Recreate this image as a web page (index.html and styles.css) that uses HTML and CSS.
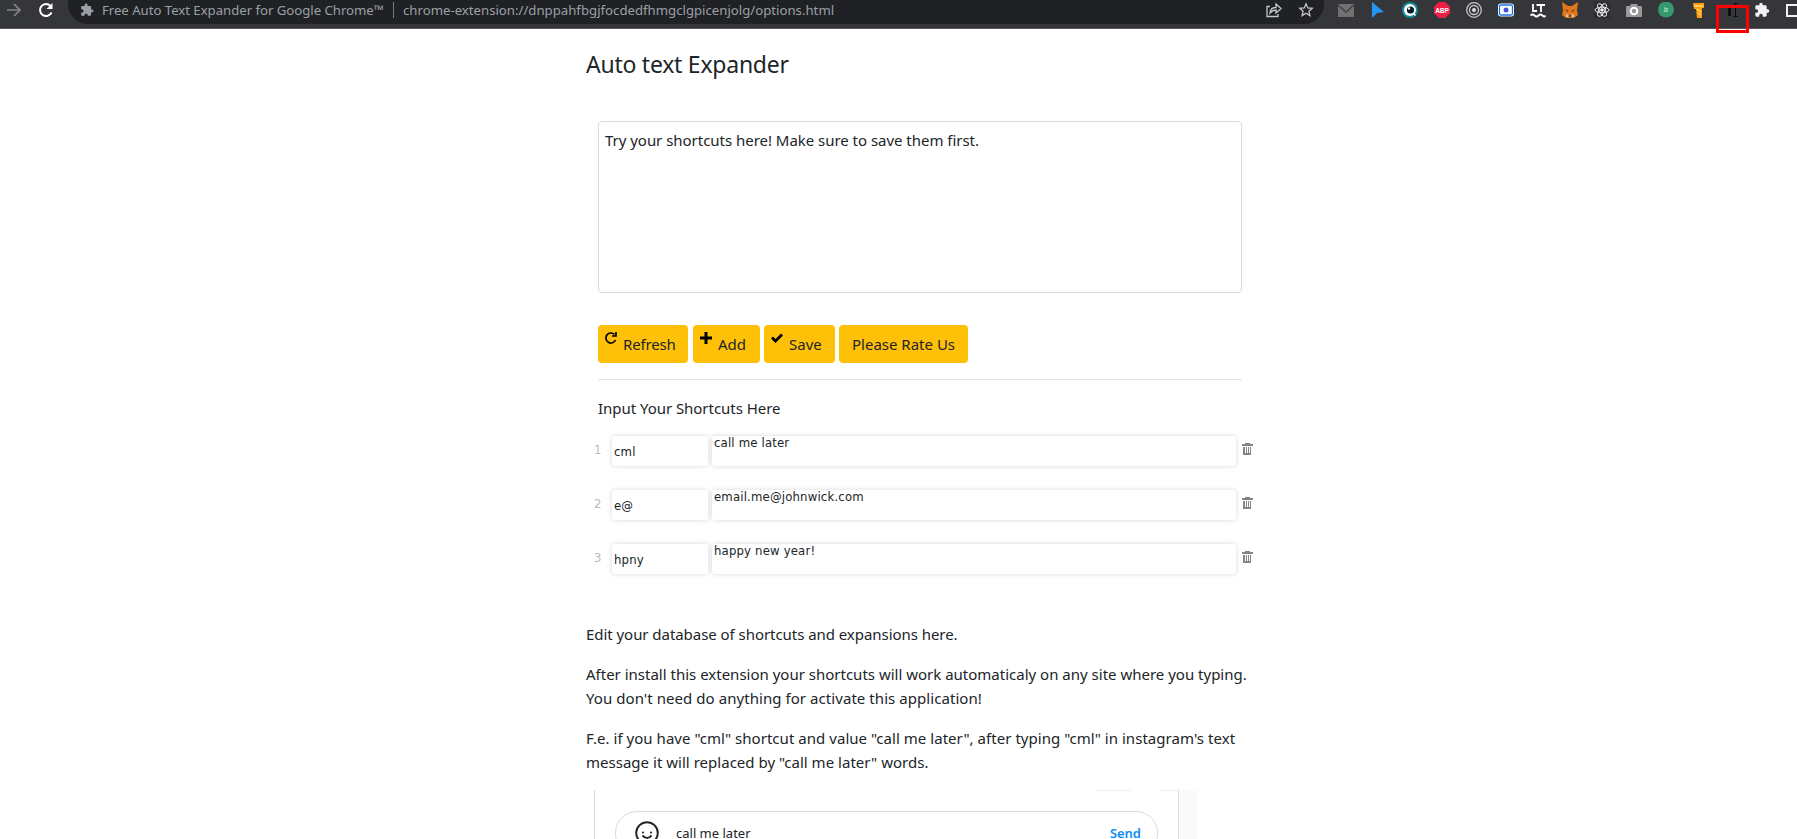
FILE: index.html
```html
<!DOCTYPE html>
<html lang="en">
<head>
<meta charset="utf-8">
<title>Free Auto Text Expander for Google Chrome</title>
<link rel="stylesheet" href="styles.css">
</head>
<body>
<svg width="0" height="0" class="defs">
  <symbol id="puzzle" viewBox="0 0 24 24"><path d="M20.5 11H19V7c0-1.100-.9-2-2-2h-4V3.500a2.500 2.500 0 0 0-5 0V5H4c-1.100 0-2 .9-2 2v3.800h1.500a2.700 2.700 0 0 1 0 5.400H2V20c0 1.100.9 2 2 2h3.800v-1.500a2.700 2.700 0 0 1 5.400 0V22H17c1.100 0 2-.9 2-2v-4h1.500a2.500 2.500 0 0 0 0-5z"/></symbol>
  <symbol id="trash" viewBox="0 0 11 12"><path d="M3 0h5v1h3v2H0V1h3zM1 4h2v6h1V4h1v6h1V4h1v6h1V4h1v8H1z"/></symbol>
</svg>
<header class="browser">
  <svg class="nav-icon forward" viewBox="0 0 16 16"><path d="M1 8h13M8 2l6 6-6 6"/></svg>
  <svg class="nav-icon reload" viewBox="0 0 16 16"><path d="M13.500 10.500A6 6 0 1 1 12.500 4"/><path class="tip" d="M14.500 1v6H8.500z"/></svg>
  <div class="omnibox">
    <svg class="site-icon"><use href="#puzzle"/></svg>
    <span class="site">Free Auto Text Expander for Google Chrome™</span>
    <span class="divider"></span>
    <span class="url">chrome-extension://dnppahfbgjfocdedfhmgclgpicenjolg/options.html</span>
    <svg class="share" viewBox="0 0 16 16"><path d="M4 4.500H1v10h11V12M4 11c.3-4 2.500-5.500 6-5.500V2l5 4.500-5 4.500V8C7 8 5.500 9 4 11z"/></svg>
    <svg class="star" viewBox="0 0 16 16"><path d="M8 1.800l1.800 4.100 4.400.4-3.300 2.900 1 4.400L8 11.300l-3.900 2.300 1-4.400-3.300-2.900 4.400-.4z"/></svg>
  </div>
  <div class="extensions">
    <svg viewBox="0 0 16 16"><path fill="#717171" d="M0 2h16v13H0z"/><path fill="none" stroke="#414141" stroke-width="1.400" d="M0 3l8 7 8-7"/></svg>
    <svg viewBox="0 0 16 16"><path fill="#2196f3" d="M2 0l12 10-7 1-5 5z"/></svg>
    <svg viewBox="0 0 16 16"><circle cx="8" cy="8" r="8" fill="#0d8c9a"/><circle cx="8" cy="8" r="6" fill="#fff"/><circle cx="8.500" cy="8" r="3.600" fill="#061b24"/><circle cx="7" cy="6.500" r="1.200" fill="#fff"/><path d="M11.500 11.500l2 2" stroke="#fff" stroke-width="1.500"/></svg>
    <svg viewBox="0 0 16 16"><path fill="#ed1e45" d="M4.700 0h6.600L16 4.700v6.600L11.300 16H4.700L0 11.300V4.700z"/><text x="8" y="10.800" class="abp">ABP</text></svg>
    <svg viewBox="0 0 16 16" fill="none" stroke="#c6c6c6" stroke-width="1.300"><circle cx="8" cy="8" r="7.300"/><circle cx="8" cy="8" r="4.500"/><circle cx="8" cy="8" r="2" fill="#ddd" stroke="none"/></svg>
    <svg viewBox="0 0 16 16"><rect y="1.500" width="16" height="13" rx="3" fill="#fff"/><rect x="1.500" y="3" width="13" height="10" rx="1.500" fill="#fff" stroke="#1677e8" stroke-width="1.300"/><circle cx="8" cy="8" r="2.500" fill="#4054d6"/></svg>
    <svg viewBox="0 0 16 16" fill="none" stroke="#fff" stroke-width="1.800"><path d="M3 2v7h4M6.500 3H15M11 3v7M.5 13.500q2-2 4 0t4 0 4 0 3 0"/></svg>
    <svg viewBox="0 0 16 16"><path fill="#e2761b" d="M0 0l6 4h4l6-4-1 9 1 4-4 3H4l-4-3 1-4z"/><path fill="#763d16" d="M3 7l4 2-2 1zM13 7L9 9l2 1zM6.500 13h3v2h-3z"/><path fill="#d7c1b3" d="M4 12l2.500 1v2H4zM12 12l-2.500 1v2H12z"/></svg>
    <svg viewBox="0 0 16 16" fill="none" stroke="#e8e8e8"><path d="M0 0h16v16H0z" fill="#2c2d31" stroke="none"/><ellipse cx="8" cy="8" rx="7" ry="2.800"/><ellipse cx="8" cy="8" rx="7" ry="2.800" transform="rotate(60 8 8)"/><ellipse cx="8" cy="8" rx="7" ry="2.800" transform="rotate(120 8 8)"/><circle cx="8" cy="8" r="1.300" fill="#fff"/></svg>
    <svg viewBox="0 0 16 16"><path fill="#999" d="M5 2h6l1 2h3q1 0 1 1v10H0V5q0-1 1-1h3z"/><circle cx="8" cy="9" r="3.300" fill="none" stroke="#fff" stroke-width="2"/></svg>
    <svg viewBox="0 0 16 16"><circle cx="8" cy="7.500" r="8" fill="#36996d"/><text x="8" y="10" class="b">b</text></svg>
    <svg viewBox="0 0 16 16"><path fill="#ff9d12" d="M3 1h11v5h-2v10H7l-1-9H4z"/><path d="M4 4h9M7 7l4 3M8 11l3 2" stroke="#ffe064" stroke-width="1.500"/></svg>
    <svg viewBox="0 0 16 16"><path fill="none" stroke="#08090b" stroke-width="2.500" d="M7.500 5v9"/><path fill="none" stroke="#08090b" d="M11.500 1.500h4M13.500 2v12M11.500 14.500h4"/></svg>
    <svg class="puzzle-button"><use href="#puzzle"/></svg>
    <svg viewBox="0 0 16 16"><path fill="none" stroke="#f1f1f1" stroke-width="2" d="M1 3h14v11H1z"/></svg>
  </div>
  <div class="highlight"></div>
</header>
<main class="page">
  <h1><span class="t-title">Auto text Expander</span></h1>
  <section class="editor">
    <div class="tryout"><span class="t-try">Try your shortcuts here! Make sure to save them first.</span></div>
    <div class="actions">
      <button class="btn refresh"><svg viewBox="0 0 12 12"><path d="M10.500 8A5 5 0 1 1 9.500 2.500M11 0v4H7"/></svg><span class="t-refresh">Refresh</span></button>
      <button class="btn add"><svg viewBox="0 0 12 12"><path class="solid" d="M4.500 0h3v4.500H12v3H7.500V12h-3V7.500H0v-3h4.500z"/></svg><span class="t-add">Add</span></button>
      <button class="btn save"><svg viewBox="0 0 12 12"><path class="solid" d="M0 6.500L2 4.500l2.500 2.500L10 1.500l2 2L4.500 11z"/></svg><span class="t-save">Save</span></button>
      <button class="btn rate"><span class="t-rate">Please Rate Us</span></button>
    </div>
    <h2><span class="t-input">Input Your Shortcuts Here</span></h2>
  </section>
  <ol class="shortcuts">
    <li><span class="num">1</span><div class="key">cml</div><div class="value">call me later</div><svg><use href="#trash"/></svg></li>
    <li><span class="num">2</span><div class="key">e@</div><div class="value">email.me@johnwick.com</div><svg><use href="#trash"/></svg></li>
    <li><span class="num">3</span><div class="key">hpny</div><div class="value">happy new year!</div><svg><use href="#trash"/></svg></li>
  </ol>
  <section class="help">
    <p><span class="t-h1">Edit your database of shortcuts and expansions here.</span></p>
    <p><span class="t-h2">After install this extension your shortcuts will work automaticaly on any site where you typing.</span><br><span class="t-h3">You don't need do anything for activate this application!</span></p>
    <p><span class="t-h4">F.e. if you have "cml" shortcut and value "call me later", after typing "cml" in instagram's text</span><br><span class="t-h5">message it will replaced by "call me later" words.</span></p>
  </section>
  <div class="demo">
    <div class="chat">
      <div class="chat-edges"><i></i><i></i></div>
      <div class="message">
        <svg viewBox="0 0 24 24"><circle cx="12" cy="12" r="10.800"/><path d="M7.500 14.500q4.500 5 9 0"/><circle class="eye" cx="8" cy="11.500" r="1.100"/><circle class="eye" cx="16" cy="11.500" r="1.100"/></svg>
        <span class="t-chat">call me later</span>
        <span class="send">Send</span>
      </div>
    </div>
    <div class="side"></div>
  </div>
</main>
</body>
</html>
```
FILE: styles.css
```css
* { box-sizing: border-box; }
body { margin: 0; height: 839px; overflow: hidden; background: #fff; color: #212529; font-family: "Noto Sans", sans-serif; font-size: 15px; }
span { white-space: nowrap; }
.defs { position: absolute; }

.browser { position: relative; display: flex; height: 29px; background: #35363a; border-bottom: 1px solid #58575c; overflow: visible; }
.nav-icon { flex: none; width: 16px; height: 16px; margin-top: 2px; fill: none; stroke: #85868a; stroke-width: 1.700; }
.forward { margin-left: 6px; }
.reload { margin-left: 16px; stroke: #fff; stroke-width: 2; }
.reload .tip { fill: #fff; stroke: none; }
.omnibox { flex: none; display: flex; width: 1256px; height: 24px; margin-left: 14px; padding-left: 12px; background: #202124; border-radius: 0 0 20px 20px; color: #9aa0a6; font-size: 13.200px; line-height: 20px; }
.site-icon { flex: none; width: 14px; height: 14px; margin: 3px 8px 0 0; fill: #9aa0a6; }
.site { width: 291px; letter-spacing: -.03px; }
.divider { width: 1px; height: 16px; margin: 2px 9px 0 0; background: #77797d; }
.url { width: 863px; }
.share, .star { flex: none; width: 16px; height: 16px; margin-top: 2px; fill: none; stroke: #c4c7c5; stroke-width: 1.300; }
.star { margin-left: 16px; }
.extensions { display: flex; gap: 16px; margin: 2px 0 0 14px; }
.extensions svg { flex: none; width: 16px; height: 16px; }
.puzzle-button { fill: #f1f1f1; }
.abp { font: bold 6.500px "Liberation Sans", sans-serif; fill: #fff; text-anchor: middle; }
.b { font: italic bold 7px "Liberation Sans", sans-serif; fill: #a4e4c4; text-anchor: middle; }
.highlight { position: absolute; left: 1716px; top: 5px; width: 33px; height: 28px; border: 3px solid #f00; }

.page { width: 668px; margin-left: 586px; }
h1 { margin: 0; padding-top: 20px; height: 92px; font-size: 23px; line-height: 30px; font-weight: 400; }
.t-title { letter-spacing: -.25px; }
.editor { width: 644px; margin-left: 12px; }
.tryout { height: 172px; padding: 6px; border: 1px solid #d8dadd; border-radius: 4px; line-height: 24px; }
.t-try { letter-spacing: -.03px; }
.actions { display: flex; height: 87px; padding-top: 32px; border-bottom: 1px solid #e3e4e5; }
.btn { display: flex; height: 38px; padding: 0 0 0 7px; border: 0; border-radius: 4px; background: #ffc107; color: #212529; font-family: inherit; font-size: 15px; line-height: 39px; }
.btn svg { flex: none; width: 12px; height: 12px; margin: 7px 6px 0 0; fill: none; stroke: #000; stroke-width: 1.700; }
.btn .solid { fill: #000; stroke: none; }
.refresh { width: 90px; margin-right: 5px; letter-spacing: -.15px; }
.add { width: 67px; margin-right: 4px; }
.save { width: 71px; margin-right: 4px; }
.rate { width: 129px; padding-left: 13px; }
h2 { height: 56px; margin: 0; padding-top: 16px; font-size: 15px; line-height: 24px; font-weight: 400; letter-spacing: -.04px; }

.shortcuts { display: grid; gap: 24px; margin: 0; padding: 0 0 0 8px; list-style: none; font: 13px "DejaVu Sans Condensed", "DejaVu Sans", sans-serif; }
.shortcuts li { display: flex; height: 30px; }
.num { width: 18px; padding-top: 6px; color: #b9bbbe; }
.key, .value { height: 30px; padding-left: 2px; border-radius: 3px; box-shadow: 0 0 5px rgba(0,0,0,.16); letter-spacing: .17px; }
.key { width: 96px; margin-right: 4px; line-height: 32px; }
.value { width: 524px; margin-right: 6px; line-height: 14px; }
.shortcuts svg { width: 11px; height: 12px; margin-top: 7px; fill: #858585; }

.help { padding-top: 48px; line-height: 24px; }
.help p { margin: 0 0 16px; }
.t-h1 { letter-spacing: -.05px; }
.t-h3 { letter-spacing: .06px; }
.t-h4 { letter-spacing: .04px; }
.t-h5 { letter-spacing: .02px; }

.demo { display: flex; height: 49px; margin-left: 8px; }
.chat { width: 585px; padding-left: 20px; border: solid #dbdbdb; border-width: 0 1px; }
.chat-edges { display: flex; justify-content: flex-end; gap: 30px; height: 21px; }
.chat-edges i { width: 36px; height: 1px; background: #eee; }
.chat-edges i + i { width: 17px; }
.message { display: flex; width: 543px; height: 45px; padding-left: 19px; border: 1px solid #dbdbdb; border-radius: 22px; font-size: 13px; line-height: 43px; }
.message svg { width: 24px; height: 24px; margin: 9px 17px 0 0; fill: none; stroke: #262626; stroke-width: 2; }
.message .eye { fill: #262626; stroke: none; }
.t-chat { width: 434px; }
.send { color: #0d8cf5; font-weight: 600; letter-spacing: -.1px; }
.side { width: 18px; background: #fafafa; }
```
